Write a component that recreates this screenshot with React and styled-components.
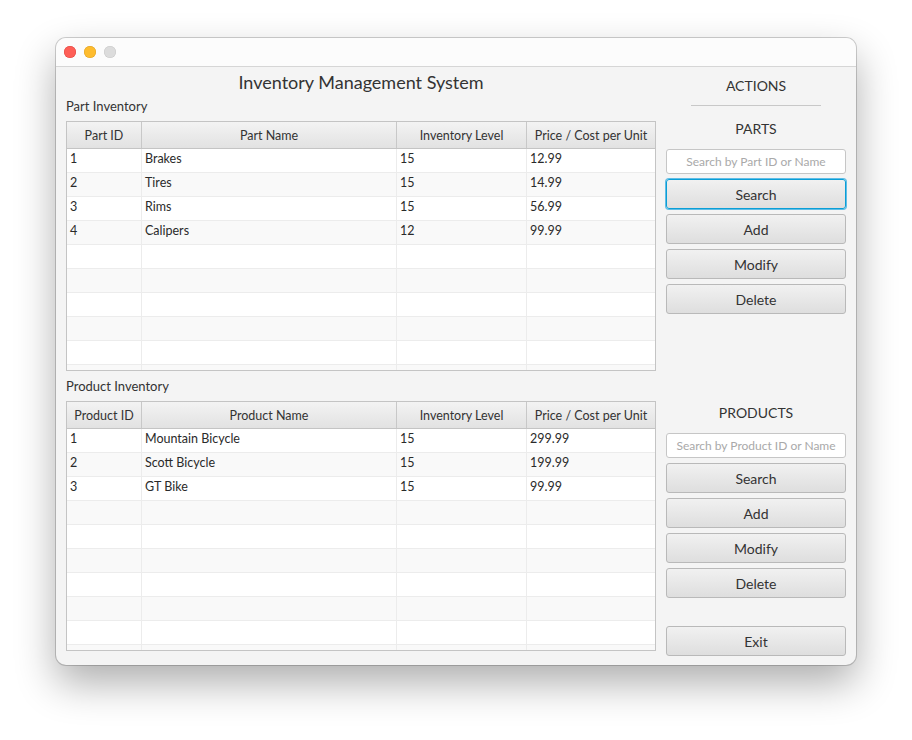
import React from "react";
import styled, { createGlobalStyle } from "styled-components";

const GlobalStyle = createGlobalStyle`
  html, body {
    margin: 0;
    padding: 0;
    background: #ffffff;
  }
  body {
    font-family: Lato, "Open Sans", "Liberation Sans", sans-serif;
    color: #333;
  }
`;

const parts = [
  { id: 1, name: "Brakes", stock: 15, price: "12.99" },
  { id: 2, name: "Tires", stock: 15, price: "14.99" },
  { id: 3, name: "Rims", stock: 15, price: "56.99" },
  { id: 4, name: "Calipers", stock: 12, price: "99.99" },
];

const products = [
  { id: 1, name: "Mountain Bicycle", stock: 15, price: "299.99" },
  { id: 2, name: "Scott Bicycle", stock: 15, price: "199.99" },
  { id: 3, name: "GT Bike", stock: 15, price: "99.99" },
];

const ROWS = 10;

const InventoryTable = ({ idLabel, nameLabel, items }) => {
  const rows = Array.from({ length: ROWS }, (_, i) => items[i] || null);
  return (
    <Table>
      <HeaderRow>
        <HeaderCell>{idLabel}</HeaderCell>
        <HeaderCell>{nameLabel}</HeaderCell>
        <HeaderCell>Inventory Level</HeaderCell>
        <HeaderCell>Price / Cost per Unit</HeaderCell>
      </HeaderRow>
      {rows.map((row, i) => (
        <Row key={i} $odd={i % 2 === 1}>
          <Cell>{row && row.id}</Cell>
          <Cell>{row && row.name}</Cell>
          <Cell>{row && row.stock}</Cell>
          <Cell>{row && row.price}</Cell>
        </Row>
      ))}
    </Table>
  );
};

const ActionGroup = ({ title, placeholder, focused }) => (
  <Group>
    <GroupTitle>{title}</GroupTitle>
    <SearchField placeholder={placeholder} />
    <Button $focused={focused}>Search</Button>
    <Button>Add</Button>
    <Button>Modify</Button>
    <Button>Delete</Button>
  </Group>
);

export default () => (
  <>
    <GlobalStyle />
    <Desktop>
      <Window>
        <TitleBar>
          <Light $color="#fe5f57" $edge="#e0443e" />
          <Light $color="#febc2e" $edge="#dea123" />
          <Light $color="#dcdcdc" $edge="#c8c8c8" />
        </TitleBar>
        <Content>
          <LeftColumn>
            <AppTitle>Inventory Management System</AppTitle>
            <SectionLabel $top={0}>Part Inventory</SectionLabel>
            <InventoryTable idLabel="Part ID" nameLabel="Part Name" items={parts} />
            <SectionLabel $top={6}>Product Inventory</SectionLabel>
            <InventoryTable idLabel="Product ID" nameLabel="Product Name" items={products} />
          </LeftColumn>
          <RightColumn>
            <ActionsTitle>ACTIONS</ActionsTitle>
            <Separator />
            <ActionGroup title="PARTS" placeholder="Search by Part ID or Name" focused />
            <ProductsGap />
            <ActionGroup title="PRODUCTS" placeholder="Search by Product ID or Name" />
            <ExitButton>Exit</ExitButton>
          </RightColumn>
        </Content>
      </Window>
    </Desktop>
  </>
);

const Desktop = styled.div`
  width: 912px;
  height: 740px;
  padding: 38px 0 0 56px;
  box-sizing: border-box;
`;

const Window = styled.div`
  width: 800px;
  height: 627px;
  border-radius: 10px;
  overflow: hidden;
  background: #f4f4f4;
  box-shadow: 0 0 0 1px rgba(0, 0, 0, 0.18), 0 18px 40px rgba(0, 0, 0, 0.32);
  display: flex;
  flex-direction: column;
`;

const TitleBar = styled.div`
  height: 28px;
  background: #fcfcfc;
  border-bottom: 1px solid #d6d6d6;
  display: flex;
  align-items: center;
  gap: 8px;
  padding-left: 8px;
  flex-shrink: 0;
`;

const Light = styled.span`
  width: 12px;
  height: 12px;
  border-radius: 50%;
  background: ${(p) => p.$color};
  box-shadow: inset 0 0 0 0.5px ${(p) => p.$edge};
`;

const Content = styled.div`
  flex: 1;
  display: flex;
  gap: 10px;
  padding: 0 10px 0 10px;
`;

const LeftColumn = styled.div`
  width: 590px;
  display: flex;
  flex-direction: column;
`;

const AppTitle = styled.div`
  height: 30px;
  line-height: 30px;
  text-align: center;
  font-size: 18px;
  color: #333;
`;

const SectionLabel = styled.div`
  height: 18px;
  line-height: 18px;
  font-size: 13px;
  color: #333;
  margin: ${(p) => p.$top}px 0 6px;
`;

const Table = styled.div`
  height: 250px;
  box-sizing: border-box;
  border: 1px solid #c4c4c4;
  background: #fff;
  overflow: hidden;
`;

const grid = `
  display: grid;
  grid-template-columns: 75px 255px 130px 1fr;
`;

const HeaderRow = styled.div`
  ${grid}
  height: 26px;
  border-bottom: 1px solid #c4c4c4;
  background: linear-gradient(#f3f3f3, #e2e2e2);
`;

const HeaderCell = styled.div`
  border-right: 1px solid #c8c8c8;
  font-size: 12.5px;
  color: #333;
  display: flex;
  align-items: center;
  justify-content: center;
  &:last-child {
    border-right: none;
  }
`;

const Row = styled.div`
  ${grid}
  height: 23px;
  border-bottom: 1px solid #ececec;
  background: ${(p) => (p.$odd ? "#f9f9f9" : "#ffffff")};
`;

const Cell = styled.div`
  border-right: 1px solid #ececec;
  font-size: 12.5px;
  color: #2a2a2a;
  padding: 0 0 4px 3px;
  display: flex;
  align-items: center;
  &:last-child {
    border-right: none;
  }
`;

const RightColumn = styled.div`
  width: 180px;
  display: flex;
  flex-direction: column;
  align-items: stretch;
`;

const ActionsTitle = styled.div`
  height: 38px;
  line-height: 38px;
  text-align: center;
  font-size: 14px;
  color: #333;
`;

const Separator = styled.div`
  height: 1px;
  background: #c8c8c8;
  margin: 0 25px;
`;

const Group = styled.div`
  display: flex;
  flex-direction: column;
  gap: 5px;
`;

const GroupTitle = styled.div`
  height: 38px;
  line-height: 46px;
  text-align: center;
  font-size: 14px;
  color: #333;
`;

const SearchField = styled.input`
  height: 25px;
  box-sizing: border-box;
  border: 1px solid #c6c6c6;
  border-radius: 3px;
  background: #fff;
  font-family: inherit;
  font-size: 12px;
  text-align: center;
  outline: none;
  &::placeholder {
    color: #a9a9a9;
  }
`;

const Button = styled.button`
  height: 30px;
  box-sizing: border-box;
  border: 1px solid ${(p) => (p.$focused ? "#0a9ed6" : "#b9b9b9")};
  box-shadow: ${(p) => (p.$focused ? "0 0 0 1px #5fbde6" : "none")};
  border-radius: 3px;
  background: linear-gradient(#f1f1f1, #dedede);
  font-family: inherit;
  font-size: 14px;
  color: #333;
  padding: 0;
`;

const ProductsGap = styled.div`
  height: 76px;
`;

const ExitButton = styled(Button)`
  margin-top: 28px;
`;
